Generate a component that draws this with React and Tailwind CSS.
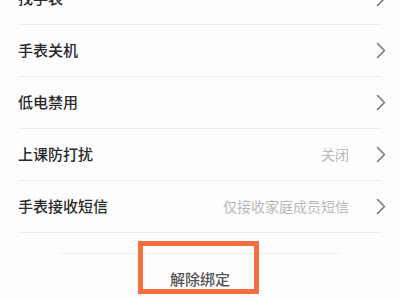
import React from 'react'

const rows = [
  { label: '找手表' },
  { label: '手表关机' },
  { label: '低电禁用' },
  { label: '上课防打扰', value: '关闭' },
  { label: '手表接收短信', value: '仅接收家庭成员短信' },
]

const Chevron = () => (
  <svg width="10" height="17" viewBox="0 0 10 17" fill="none">
    <path d="M1.5 1.5 L8.5 8.5 L1.5 15.5" stroke="#7a7a7a" strokeWidth="1.6" strokeLinecap="round" strokeLinejoin="round" />
  </svg>
)

const App = () => {
  return (
    <div
      className="relative h-[300px] w-[400px] overflow-hidden bg-[#fdfdfd]"
      style={{ fontFamily: '"Noto Sans CJK SC", "Noto Sans", sans-serif' }}
    >
      <div className="-mt-[27px]">
        {rows.map((row) => (
          <div key={row.label}>
            <div className="flex h-[51px] items-center pl-[18px] pr-[14px]">
              <span className="flex-1 text-[15px] font-medium text-[#2a2a2a]">{row.label}</span>
              {row.value && <span className="mr-[27px] text-[14px] text-[#b8b8b8]">{row.value}</span>}
              <Chevron />
            </div>
            <div className="mx-[18px] h-px bg-[#ececec]" />
          </div>
        ))}
      </div>

      <div className="mx-[60px] mt-[20px] h-px bg-[#efefef]" />

      <div className="mt-[14px] flex justify-center">
        <span className="text-[15px] font-medium text-[#555]">解除绑定</span>
      </div>

      <div className="absolute left-[138px] top-[241px] h-[53px] w-[121px] border-[5px] border-[#f5703e]" />
    </div>
  )
}

export default App
